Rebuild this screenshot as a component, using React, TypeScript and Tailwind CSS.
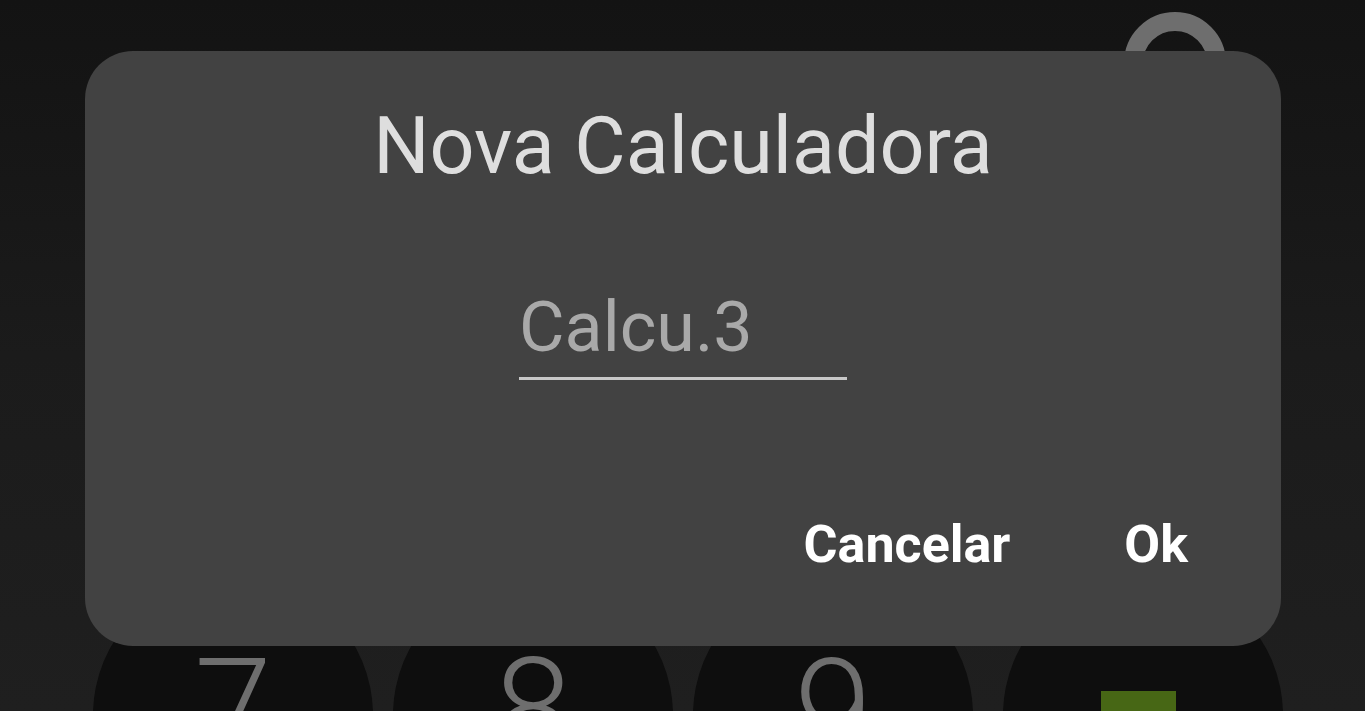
import React from "react";

const keys = ["7", "8", "9"];

const App = () => {
  return (
    <div className="relative h-[711px] w-[1365px] overflow-hidden bg-linear-to-b from-[#131313] via-[#1b1b1b] to-[#1f1f1f] font-['Roboto',sans-serif]">
      {/* app behind the dialog */}
      <div className="flex flex-col">
        <div className="flex pt-[12px] pl-[1124px]">
          <div className="h-[102px] w-[102px] rounded-full border-[19px] border-[#6e6e6e]" />
        </div>

        <div className="mt-[461px] flex pl-[93px]">
          {keys.map((k) => (
            <div
              key={k}
              className="mr-[20px] flex h-[280px] w-[280px] shrink-0 justify-center rounded-full bg-[#0e0e0e] pt-[64px]"
            >
              <span className="text-[140px] font-light leading-none text-[#6e6e6e]">
                {k}
              </span>
            </div>
          ))}
          <div className="ml-[10px] flex h-[280px] w-[280px] shrink-0 justify-center rounded-full bg-[#0e0e0e] pt-[116px]">
            <div className="ml-[-10px] h-[75px] w-[75px] bg-[#476715]" />
          </div>
        </div>
      </div>

      {/* dialog */}
      <div className="absolute left-[85px] top-[51px] flex h-[595px] w-[1196px] flex-col items-center rounded-[48px] bg-[#424242] pt-[56px]">
        <h1 className="h-[79px] text-[79px] leading-none font-normal text-[#dedede]">
          Nova Calculadora
        </h1>

        <div className="mt-[106px] w-[328px] border-b-[3px] border-[#c8c8c8] pb-[15px]">
          <input
            defaultValue="Calcu.3"
            className="block h-[70px] w-full bg-transparent p-0 text-[70px] leading-none text-[#a9a9a9] outline-none"
          />
        </div>

        <div className="mt-[139px] flex w-full justify-end gap-[114px] pr-[93px] text-[52px] font-bold leading-none text-white">
          <button className="h-[52px]">Cancelar</button>
          <button className="h-[52px]">Ok</button>
        </div>
      </div>
    </div>
  );
};

export default App;
